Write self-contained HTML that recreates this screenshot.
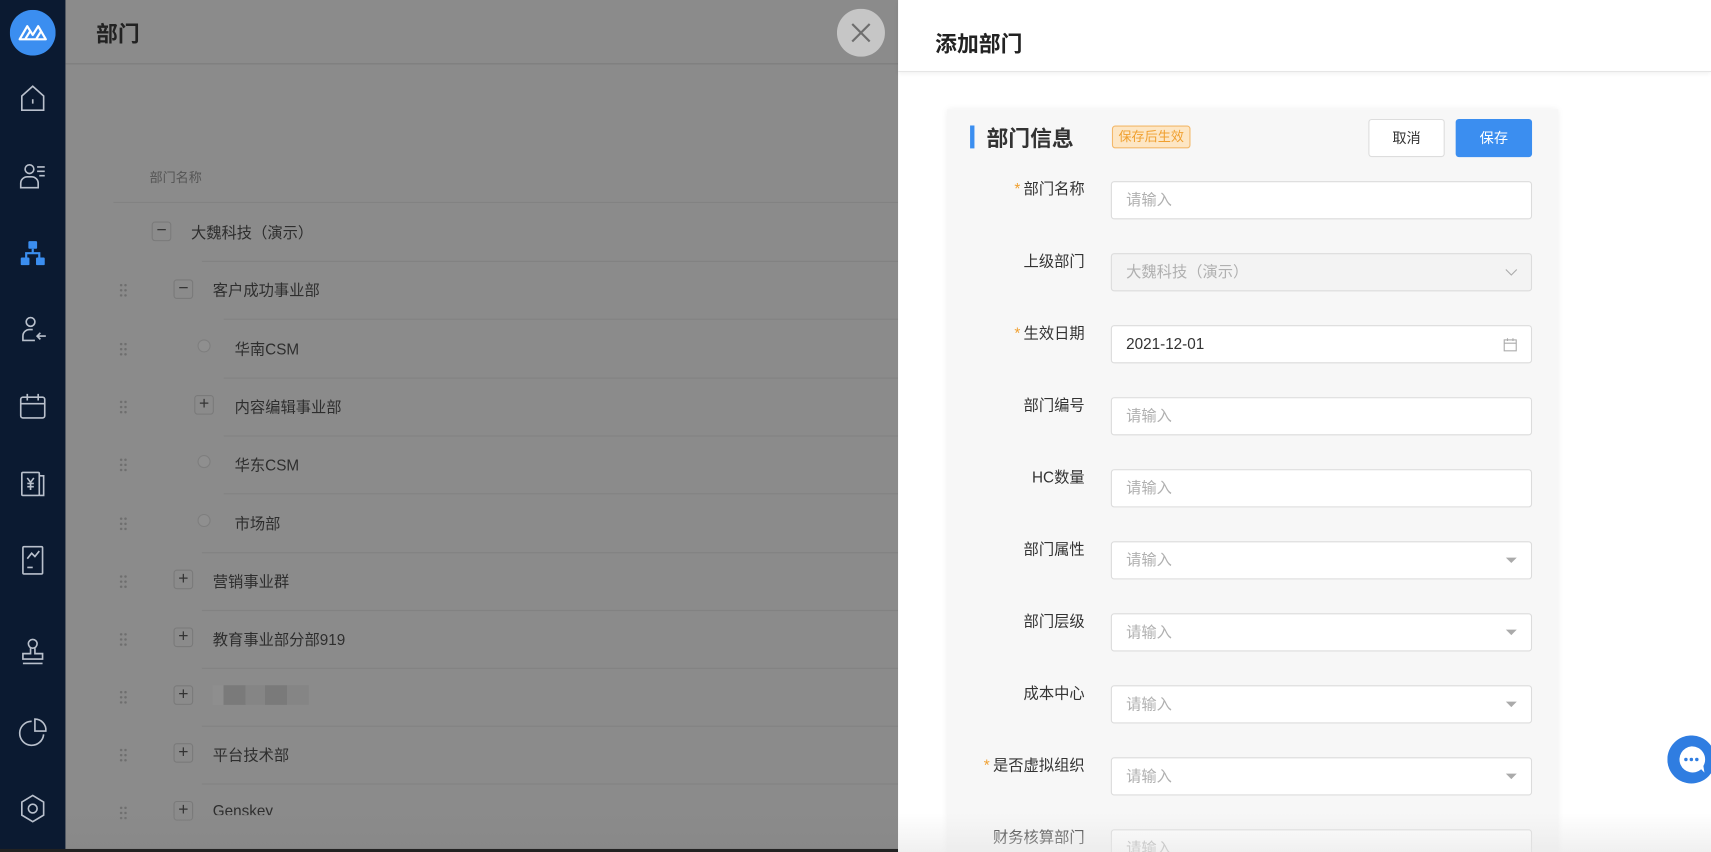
<!DOCTYPE html>
<html><head><meta charset="utf-8"><style>
*{box-sizing:border-box;margin:0;padding:0}
html,body{width:1711px;height:852px;overflow:hidden;background:#8b8b8b}
body{font-family:"Liberation Sans","Noto Sans CJK SC",sans-serif}
#w{position:absolute;left:0;top:0;width:1568px;height:781px;transform:scale(1.09120);transform-origin:0 0;overflow:hidden}
.side{position:absolute;left:0;top:0;width:60px;height:781px;background:#0b1a31}
.side svg{position:absolute;left:16px}
.main{position:absolute;left:60px;top:0;width:763px;height:781px;background:#8b8b8b}
.t{position:absolute;color:#2e2e2e;font-size:14px;white-space:nowrap}
.ln{position:absolute;height:1px;background:#828282;right:0}
.box{position:absolute;width:18px;height:18px;border:1px solid #7a7a7a;border-radius:3px;color:#333;font-size:16px;line-height:15px;text-align:center}
.dot{position:absolute;width:12px;height:12px;border-radius:50%;border:1px solid #7e7e7e;background:#8f8f8f}
.drag{position:absolute;width:8px;height:14px;background-image:radial-gradient(circle,#6e6e6e 1px,transparent 1.3px);background-size:4px 4.7px}
.drawer{position:absolute;left:823px;top:0;width:745px;height:781px;background:#fff}
.dh{position:absolute;left:0;top:0;width:745px;height:66px;border-bottom:1px solid #e6e6e6;box-shadow:0 2px 4px rgba(0,0,0,.06)}
.card{position:absolute;left:45px;top:100px;width:560px;height:700px;background:#f7f7f7;box-shadow:0 0 6px rgba(0,0,0,.06)}
.lab{position:absolute;right:434px;font-size:14px;color:#333;white-space:nowrap;text-align:right}
.lab b{color:#f0a030;font-weight:normal;margin-right:3px}
.in{position:absolute;left:150px;width:386px;height:35px;background:#fff;border:1px solid #dcdcdc;border-radius:3px;font-size:14px;color:#b0b0b0;padding-left:13px;line-height:33px}
.arr{position:absolute;right:13px;top:14px;width:0;height:0;border-left:5px solid transparent;border-right:5px solid transparent;border-top:5px solid #aaa}
</style></head><body><div id="w">
<div class="side">
<svg style="left:9px;top:9px" width="42" height="42" viewBox="0 0 42 42"><circle cx="21" cy="21" r="21" fill="#3b8ef0"/><path d="M9 27 L16 15 L21 23 L26 15 L33 27 Z M14 27 L19 19 M24 27 L29 19" stroke="#fff" stroke-width="2" fill="none" stroke-linejoin="round"/></svg>
<svg style="top:76px" width="28" height="28" viewBox="0 0 28 28" fill="none" stroke="#b9c0cc" stroke-width="1.5"><path d="M4 12 L14 3 L24 12 V25 H4 Z"/><path d="M14 15 V19"/></svg>
<svg style="top:147px" width="28" height="28" viewBox="0 0 28 28" fill="none" stroke="#b9c0cc" stroke-width="1.5"><circle cx="11" cy="8" r="4"/><path d="M3 25 V21 A6 6 0 0 1 9 15 H13 A6 6 0 0 1 19 21 V25 Z"/><path d="M18 6 H25 M18 10 H25 M20 14 H25"/></svg>
<svg style="top:218px" width="28" height="28" viewBox="0 0 28 28" fill="#3b8ef0"><rect x="10" y="3" width="8" height="7" rx="1"/><rect x="3" y="18" width="8" height="7" rx="1"/><rect x="17" y="18" width="8" height="7" rx="1"/><path d="M13 10 H15 V13 H21 V18 H19 V15 H9 V18 H7 V13 H13 Z"/></svg>
<svg style="top:288px" width="28" height="28" viewBox="0 0 28 28" fill="none" stroke="#b9c0cc" stroke-width="1.5"><circle cx="12" cy="7" r="4"/><path d="M16 24 H5 V20 A6 6 0 0 1 11 14 H14"/><path d="M26 20 H18 M21 17 L18 20 L21 23"/></svg>
<svg style="top:358px" width="28" height="28" viewBox="0 0 28 28" fill="none" stroke="#b9c0cc" stroke-width="1.5"><rect x="3" y="6" width="22" height="19" rx="2"/><path d="M3 12 H25 M9 3 V9 M19 3 V9"/></svg>
<svg style="top:429px" width="28" height="28" viewBox="0 0 28 28" fill="none" stroke="#b9c0cc" stroke-width="1.5"><rect x="4" y="4" width="16" height="21" rx="1"/><path d="M20 7 H24 V25 H20"/><path d="M9 9 L12 13 L15 9 M12 13 V20 M9 14 H15 M9 17 H15"/></svg>
<svg style="top:498px" width="28" height="30" viewBox="0 0 28 30" fill="none" stroke="#b9c0cc" stroke-width="1.5"><rect x="5" y="3" width="18" height="25" rx="1"/><path d="M9 14 L13 9 L16 12 L20 7 M9 22 H14"/></svg>
<svg style="top:583px" width="28" height="30" viewBox="0 0 28 30" fill="none" stroke="#b9c0cc" stroke-width="1.5"><circle cx="14" cy="7" r="4"/><path d="M12 11 V16 H5 V21 H23 V16 H16 V11 M5 25 H23"/></svg>
<svg style="top:656px" width="28" height="30" viewBox="0 0 28 30" fill="none" stroke="#b9c0cc" stroke-width="1.5"><path d="M13 5 A11 11 0 1 0 24 17"/><path d="M16 3 V14 H26 A10 10 0 0 0 16 3 Z"/></svg>
<svg style="top:726px" width="28" height="30" viewBox="0 0 28 30" fill="none" stroke="#b9c0cc" stroke-width="1.5"><path d="M14 3 L24 9 V21 L14 27 L4 21 V9 Z"/><circle cx="14" cy="15" r="4"/></svg>
</div>
<div class="main">
<div class="t" style="left:28px;top:15px;font-size:20px;font-weight:bold;color:#222">部门</div>
<div class="ln" style="left:0;top:58px;background:#7c7c7c"></div>
<div class="t" style="left:77px;top:154px;font-size:12px;color:#555">部门名称</div>
<div class="ln" style="left:44px;top:185px"></div>

<div class="box" style="left:79px;top:203px">−</div><div class="t" style="left:115px;top:203px">大魏科技（演示）</div><div class="ln" style="left:125px;top:239px"></div>

<div class="drag" style="left:49px;top:259px"></div><div class="box" style="left:99px;top:256px">−</div><div class="t" style="left:135px;top:256px">客户成功事业部</div><div class="ln" style="left:145px;top:292px"></div>

<div class="drag" style="left:49px;top:313px"></div><div class="dot" style="left:121px;top:311px"></div><div class="t" style="left:155px;top:310px">华南CSM</div><div class="ln" style="left:145px;top:346px"></div>

<div class="drag" style="left:49px;top:366px"></div><div class="box" style="left:118px;top:362px">+</div><div class="t" style="left:155px;top:363px">内容编辑事业部</div><div class="ln" style="left:145px;top:399px"></div>

<div class="drag" style="left:49px;top:419px"></div><div class="dot" style="left:121px;top:417px"></div><div class="t" style="left:155px;top:416px">华东CSM</div><div class="ln" style="left:145px;top:452px"></div>

<div class="drag" style="left:49px;top:473px"></div><div class="dot" style="left:121px;top:471px"></div><div class="t" style="left:155px;top:470px">市场部</div><div class="ln" style="left:125px;top:506px"></div>

<div class="drag" style="left:49px;top:526px"></div><div class="box" style="left:99px;top:522px">+</div><div class="t" style="left:135px;top:523px">营销事业群</div><div class="ln" style="left:125px;top:559px"></div>

<div class="drag" style="left:49px;top:579px"></div><div class="box" style="left:99px;top:575px">+</div><div class="t" style="left:135px;top:576px">教育事业部分部919</div><div class="ln" style="left:125px;top:612px"></div>

<div class="drag" style="left:49px;top:632px"></div><div class="box" style="left:99px;top:628px">+</div><div style="position:absolute;left:135px;top:628px;width:88px;height:18px;background:linear-gradient(90deg,#8e8e8e 0 10px,#7a7a7a 10px 30px,#858585 30px 48px,#7a7a7a 48px 68px,#858585 68px)"></div><div class="ln" style="left:125px;top:665px"></div>

<div class="drag" style="left:49px;top:685px"></div><div class="box" style="left:99px;top:681px">+</div><div class="t" style="left:135px;top:682px">平台技术部</div><div class="ln" style="left:125px;top:718px"></div>

<div class="drag" style="left:49px;top:738px"></div><div class="box" style="left:99px;top:734px">+</div><div class="t" style="left:135px;top:735px;height:12px;overflow:hidden">Genskey</div>
<div style="position:absolute;left:0;top:745px;width:763px;height:36px;background:linear-gradient(#8b8b8b00,#888)"></div>
<svg style="position:absolute;left:707px;top:8px" width="44" height="44" viewBox="0 0 44 44"><circle cx="22" cy="22" r="22" fill="#c6c6c6"/><path d="M14 14 L30 30 M30 14 L14 30" stroke="#6e6e6e" stroke-width="2"/></svg>
</div>
<div style="position:absolute;left:0;top:778px;width:1568px;height:3px;background:#222"></div>
<div class="drawer">
<div class="dh"><div style="position:absolute;left:34px;top:24px;font-size:20px;font-weight:bold;color:#222">添加部门</div></div>
<div class="card">
<div style="position:absolute;left:21px;top:15px;width:4px;height:21px;background:#3b8ef0"></div>
<div style="position:absolute;left:36px;top:11px;font-size:20px;font-weight:bold;color:#333">部门信息</div>
<div style="position:absolute;left:151px;top:15px;width:72px;height:21px;border:1px solid #f3b86a;background:#fde6c4;border-radius:3px;color:#f0a030;font-size:12px;line-height:19px;text-align:center">保存后生效</div>
<div style="position:absolute;left:386px;top:9px;width:70px;height:35px;border:1px solid #ddd;background:#fff;border-radius:3px;font-size:13px;color:#333;text-align:center;line-height:33px">取消</div>
<div style="position:absolute;left:466px;top:9px;width:70px;height:35px;background:#3b8ef0;border-radius:3px;font-size:13px;color:#fff;text-align:center;line-height:35px">保存</div>

<div class="lab" style="top:63px"><b>*</b>部门名称</div><div class="in" style="top:66px">请输入</div>
<div class="lab" style="top:129px">上级部门</div><div class="in" style="top:132px;background:#f3f3f3">大魏科技（演示）<svg style="position:absolute;right:12px;top:12px" width="12" height="10" viewBox="0 0 12 10"><path d="M1 2 L6 7 L11 2" stroke="#aaa" fill="none"/></svg></div>
<div class="lab" style="top:195px"><b>*</b>生效日期</div><div class="in" style="top:198px;color:#333">2021-12-01<svg style="position:absolute;right:12px;top:10px" width="14" height="14" viewBox="0 0 14 14" fill="none" stroke="#aaa"><rect x="1.5" y="2.5" width="11" height="10"/><path d="M1.5 5.5 H12.5 M4.5 1 V3.5 M9.5 1 V3.5"/></svg></div>
<div class="lab" style="top:261px">部门编号</div><div class="in" style="top:264px">请输入</div>
<div class="lab" style="top:327px">HC数量</div><div class="in" style="top:330px">请输入</div>
<div class="lab" style="top:393px">部门属性</div><div class="in" style="top:396px">请输入<i class="arr"></i></div>
<div class="lab" style="top:459px">部门层级</div><div class="in" style="top:462px">请输入<i class="arr"></i></div>
<div class="lab" style="top:525px">成本中心</div><div class="in" style="top:528px">请输入<i class="arr"></i></div>
<div class="lab" style="top:591px"><b>*</b>是否虚拟组织</div><div class="in" style="top:594px">请输入<i class="arr"></i></div>
<div class="lab" style="top:657px">财务核算部门</div><div class="in" style="top:660px">请输入</div>
</div>
<div style="position:absolute;left:0;top:745px;width:745px;height:36px;background:linear-gradient(rgba(255,255,255,0),rgba(230,230,230,.6))"></div>
<svg style="position:absolute;left:705px;top:674px" width="44" height="46" viewBox="0 0 44 46"><circle cx="22" cy="22" r="22" fill="#2f7de1"/><path d="M22 10 A12 12 0 1 0 31 31 L34 34 L33 28 A12 12 0 0 0 22 10 Z" fill="#fff"/><circle cx="17" cy="22" r="1.6" fill="#2f7de1"/><circle cx="22" cy="22" r="1.6" fill="#2f7de1"/><circle cx="27" cy="22" r="1.6" fill="#2f7de1"/></svg>
</div>
</div></body></html>
